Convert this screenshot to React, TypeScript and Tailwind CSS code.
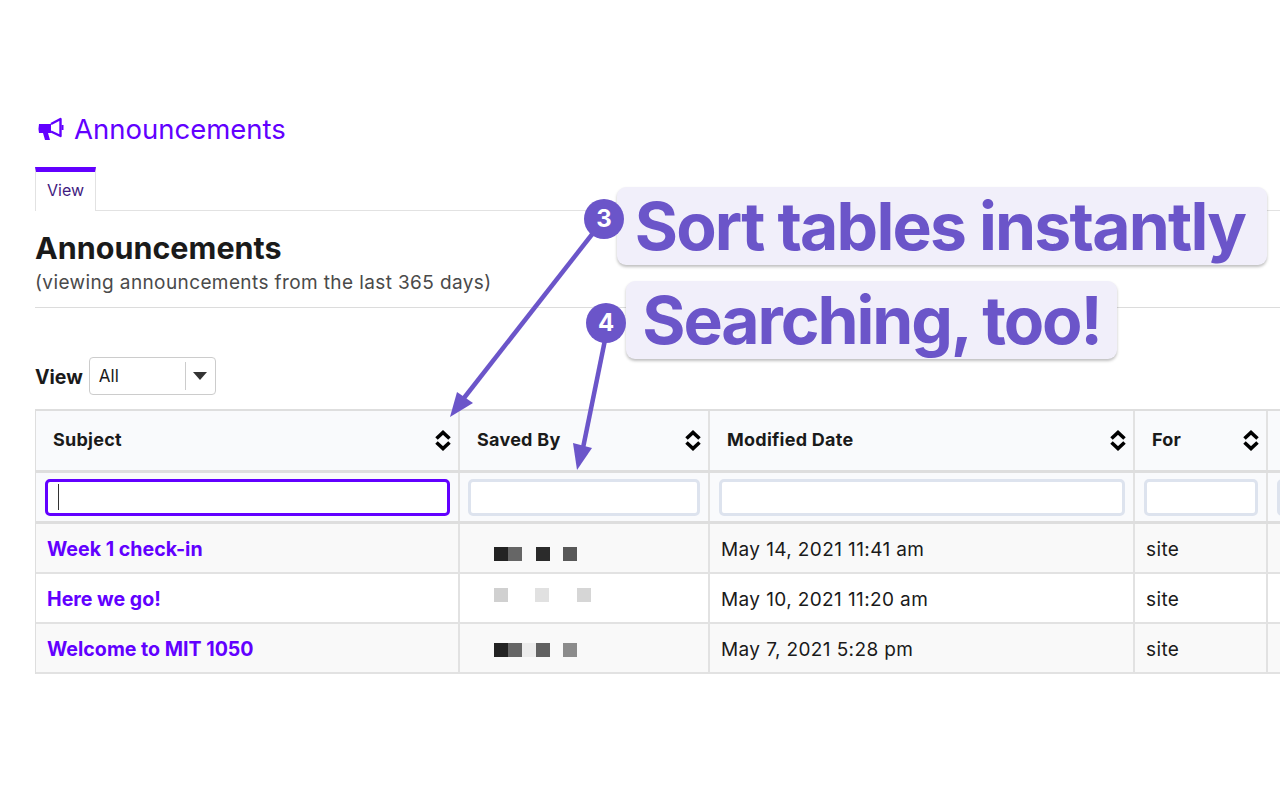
import React from "react";

const SortIcon = () => {
  return (
    <svg width="16" height="21" viewBox="0 0 16 21" fill="none" className="shrink-0">
      <path d="M1.5 8.5 L8 2.5 L14.5 8.5" stroke="#000" strokeWidth="3.6" />
      <path d="M1.5 12.5 L8 18.5 L14.5 12.5" stroke="#000" strokeWidth="3.6" />
    </svg>
  );
};

const MegaphoneIcon = () => {
  return (
    <svg width="26" height="26" viewBox="0 0 26 26" fill="none" className="shrink-0">
      <path d="M1 8 H13 V17 H10 L12 24 H7 L5 17 H1 Q0 12.5 1 8 Z" fill="#6200ff" />
      <path d="M13 8 L22.5 3 V20 L13 15.5" stroke="#6200ff" strokeWidth="2.4" strokeLinejoin="round" />
      <rect x="23.5" y="9" width="2" height="5" fill="#6200ff" />
    </svg>
  );
};

const columns = [
  { title: "Subject", width: "w-[424px]", filter: "w-[405px]", pad: "pl-[9px]" },
  { title: "Saved By", width: "w-[250px]", filter: "w-[232px]", pad: "pl-[8px]" },
  { title: "Modified Date", width: "w-[425px]", filter: "w-[406px]", pad: "pl-[9px]" },
  { title: "For", width: "w-[133px]", filter: "w-[114px]", pad: "pl-[9px]" },
];

// blurred out names, one block per pixel: colour and left gap
const blur1 = [
  { c: "bg-[#232323]", m: "ml-0" },
  { c: "bg-[#666666]", m: "ml-0" },
  { c: "bg-[#2b2b2b]", m: "ml-[14px]" },
  { c: "bg-[#585858]", m: "ml-[13px]" },
];
const blur2 = [
  { c: "bg-[#d0d0d0]", m: "ml-0" },
  { c: "bg-[#e1e1e1]", m: "ml-[27px]" },
  { c: "bg-[#d6d6d6]", m: "ml-[28px]" },
];
const blur3 = [
  { c: "bg-[#232323]", m: "ml-0" },
  { c: "bg-[#666666]", m: "ml-0" },
  { c: "bg-[#ececec]", m: "ml-0" },
  { c: "bg-[#616161]", m: "ml-0" },
  { c: "bg-[#8c8c8c]", m: "ml-[13px]" },
];

const rows = [
  { subject: "Week 1 check-in", blur: blur1, offset: "pt-[12px]", date: "May 14, 2021 11:41 am", bg: "bg-[#f9f9f9]" },
  { subject: "Here we go!", blur: blur2, offset: "pb-[6px]", date: "May 10, 2021 11:20 am", bg: "bg-white" },
  { subject: "Welcome to MIT 1050", blur: blur3, offset: "pt-[4px]", date: "May 7, 2021 5:28 pm", bg: "bg-[#f9f9f9]" },
];

export default function App() {
  return (
    <div className="relative w-[1280px] h-[800px] overflow-hidden bg-white pl-[35px] pt-[109px] font-['Inter',sans-serif] text-[#1a1a1a]">
      {/* Page title */}
      <div className="flex items-center h-[40px] text-[#6200ff]">
        <div className="ml-[3px]">
          <MegaphoneIcon />
        </div>
        <span className="ml-[10px] text-[27.5px] leading-[40px]">Announcements</span>
      </div>

      {/* Tabs */}
      <div className="mt-[18px] h-[44px] border-b border-[#e2e2e2]">
        <div className="w-[61px] h-[44px] bg-white border-t-[5px] border-x border-t-[#6200ff] border-x-[#e2e2e2] flex items-center justify-center pb-[4px] text-[16px] text-[#3f1a80]">
          View
        </div>
      </div>

      <h1 className="mt-[19px] text-[30.5px] leading-[36px] font-bold">Announcements</h1>
      <p className="mt-[4px] text-[19px] leading-[26px] tracking-[0.39px] text-[#4a4a4a]">
        (viewing announcements from the last 365 days)
      </p>
      <div className="mt-[11px] border-b border-[#dcdcdc]"></div>

      {/* View select */}
      <div className="mt-[49px] flex items-center h-[38px]">
        <span className="pt-[4px] text-[19.5px] font-bold">View</span>
        <div className="ml-[6px] w-[127px] h-[38px] border border-[#cccccc] rounded-[4px] flex items-center">
          <span className="ml-[9px] w-[86px] pt-[2px] text-[17px]">All</span>
          <div className="h-[28px] w-px bg-[#cccccc]"></div>
          <div className="ml-[7px] w-0 h-0 border-x-[7.5px] border-x-transparent border-t-[8px] border-t-[#333333]"></div>
        </div>
      </div>

      {/* Table */}
      <div className="mt-[14px] w-[1300px] border-t-2 border-l border-[#dedede]">
        <div className="flex h-[62px] bg-[#f9fafc] border-b-[3px] border-[#dedede]">
          {columns.map((col) => (
            <div
              key={col.title}
              className={`${col.width} flex items-center justify-between pl-[17px] pr-[7px] border-r-2 border-[#e2e2e2] text-[18px] tracking-[0.25px] font-bold`}
            >
              <span className="pb-[2px]">{col.title}</span>
              <SortIcon />
            </div>
          ))}
          <div className="flex-1"></div>
        </div>
        <div className="flex h-[51px] bg-[#f9fafc] border-b-[3px] border-[#dedede]">
          {columns.map((col, i) => (
            <div key={col.title} className={`${col.width} flex items-center ${col.pad} border-r-2 border-[#e2e2e2]`}>
              {i === 0 ? (
                <div className={`${col.filter} h-[37px] bg-white border-[3px] border-[#6200ff] rounded-[5px] flex items-center pl-[10px]`}>
                  <div className="w-px h-[26px] bg-[#333333]"></div>
                </div>
              ) : (
                <div className={`${col.filter} h-[37px] bg-white border-[3px] border-[#dde3ee] rounded-[5px]`}></div>
              )}
            </div>
          ))}
          <div className="pl-[9px] flex items-center">
            <div className="w-[40px] h-[37px] bg-white border-[3px] border-[#dde3ee] rounded-[5px]"></div>
          </div>
        </div>
        {rows.map((row) => (
          <div key={row.subject} className={`flex h-[50px] ${row.bg} border-b-2 border-[#e2e2e2]`}>
            <div className="w-[424px] flex items-center pl-[11px] pt-[3px] border-r-2 border-[#e2e2e2] text-[19.6px] font-bold text-[#6200ff]">
              {row.subject}
            </div>
            <div className={`w-[250px] flex items-center pl-[34px] ${row.offset} border-r-2 border-[#e2e2e2]`}>
              {row.blur.map((b, i) => (
                <div key={i} className={`w-[14px] h-[14px] ${b.c} ${b.m}`}></div>
              ))}
            </div>
            <div className="w-[425px] flex items-center pl-[11px] pt-[5px] border-r-2 border-[#e2e2e2] text-[19px] tracking-[0.39px]">{row.date}</div>
            <div className="w-[133px] flex items-center pl-[11px] pt-[5px] border-r-2 border-[#e2e2e2] text-[19px] tracking-[0.39px]">site</div>
            <div className="flex-1"></div>
          </div>
        ))}
      </div>

      {/* Annotation arrows */}
      <svg className="absolute left-0 top-0 pointer-events-none" width="1280" height="800" viewBox="0 0 1280 800">
        <path d="M597 228 L464 398" stroke="#6b55c9" strokeWidth="4.5" />
        <path d="M450 417 L457 392 L473 403 Z" fill="#6b55c9" />
        <path d="M606 335 L583 448" stroke="#6b55c9" strokeWidth="4.5" />
        <path d="M577 470 L573 443 L592 448 Z" fill="#6b55c9" />
      </svg>

      {/* Callouts */}
      <div className="absolute left-[617px] top-[187px] w-[650px] h-[78px] rounded-[9px] bg-[#f1effa] shadow-[0_2px_3px_rgba(0,0,0,0.25)] flex items-center justify-center pr-[4px] text-[66px] font-bold text-[#6b55c9] whitespace-nowrap tracking-[-1.8px]">
        Sort tables instantly
      </div>
      <div className="absolute left-[626px] top-[281px] w-[491px] h-[78px] rounded-[9px] bg-[#f1effa] shadow-[0_2px_3px_rgba(0,0,0,0.25)] flex items-center justify-center text-[66px] font-bold text-[#6b55c9] whitespace-nowrap tracking-[-2.1px]">
        Searching, too!
      </div>
      <div className="absolute left-[584px] top-[199px] w-[40px] h-[40px] rounded-full bg-[#6b55c9] flex items-center justify-center text-[24px] font-bold text-white">
        3
      </div>
      <div className="absolute left-[586px] top-[303px] w-[40px] h-[40px] rounded-full bg-[#6b55c9] flex items-center justify-center text-[24px] font-bold text-white">
        4
      </div>
    </div>
  );
}
